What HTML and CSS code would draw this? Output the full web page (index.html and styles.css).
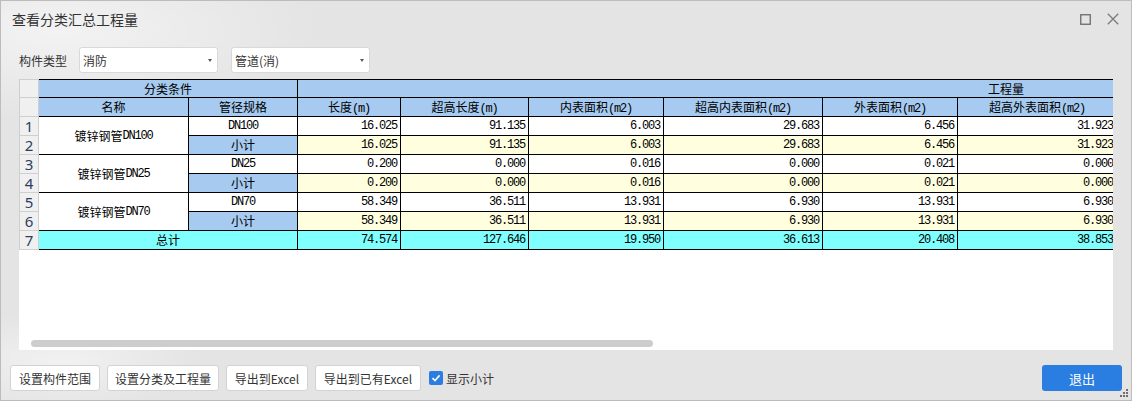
FILE: index.html
```html
<!DOCTYPE html>
<html lang="zh-CN">
<head>
<meta charset="utf-8">
<title>查看分类汇总工程量</title>
<link rel="stylesheet" href="styles.css">
</head>
<body>
<div class="window">
  <div class="titlebar">
    <div class="title">查看分类汇总工程量</div>
    <div class="winctl">
      <svg class="ico-max" width="11" height="11" viewBox="0 0 11 11"><rect x="0.75" y="0.75" width="9.5" height="9.5" fill="none" stroke="#6a6a6a" stroke-width="1.3"/></svg>
      <svg class="ico-close" width="12" height="12" viewBox="0 0 12 12"><path d="M0.8 0.8L11.2 11.2M11.2 0.8L0.8 11.2" stroke="#7a7a7a" stroke-width="1.3" fill="none"/></svg>
    </div>
  </div>

  <div class="toolbar">
    <span class="label">构件类型</span>
    <div class="select"><span>消防</span><i class="caret"></i></div>
    <div class="select"><span>管道(消)</span><i class="caret"></i></div>
  </div>

  <div class="gridwrap">
    <div class="sheet">
      <div class="table">
        <div class="c rn first"></div>
        <div class="c h top span2">分类条件</div>
        <div class="c h top span6 gcl">工程量</div>

        <div class="c rn"></div>
        <div class="c h">名称</div>
        <div class="c h">管径规格</div>
        <div class="c h">长度<span class="m">(m)</span></div>
        <div class="c h">超高长度<span class="m">(m)</span></div>
        <div class="c h">内表面积<span class="m">(m2)</span></div>
        <div class="c h">超高内表面积<span class="m">(m2)</span></div>
        <div class="c h">外表面积<span class="m">(m2)</span></div>
        <div class="c h">超高外表面积<span class="m">(m2)</span></div>

        <div class="c rn">1</div>
        <div class="c name">镀锌钢管<span class="m">DN100</span></div>
        <div class="c spec m">DN100</div>
        <div class="c n">16.025</div><div class="c n">91.135</div><div class="c n">6.003</div><div class="c n">29.683</div><div class="c n">6.456</div><div class="c n">31.923</div>

        <div class="c rn">2</div>
        <div class="c h">小计</div>
        <div class="c n y">16.025</div><div class="c n y">91.135</div><div class="c n y">6.003</div><div class="c n y">29.683</div><div class="c n y">6.456</div><div class="c n y">31.923</div>

        <div class="c rn">3</div>
        <div class="c name">镀锌钢管<span class="m">DN25</span></div>
        <div class="c spec m">DN25</div>
        <div class="c n">0.200</div><div class="c n">0.000</div><div class="c n">0.016</div><div class="c n">0.000</div><div class="c n">0.021</div><div class="c n">0.000</div>

        <div class="c rn">4</div>
        <div class="c h">小计</div>
        <div class="c n y">0.200</div><div class="c n y">0.000</div><div class="c n y">0.016</div><div class="c n y">0.000</div><div class="c n y">0.021</div><div class="c n y">0.000</div>

        <div class="c rn">5</div>
        <div class="c name">镀锌钢管<span class="m">DN70</span></div>
        <div class="c spec m">DN70</div>
        <div class="c n">58.349</div><div class="c n">36.511</div><div class="c n">13.931</div><div class="c n">6.930</div><div class="c n">13.931</div><div class="c n">6.930</div>

        <div class="c rn">6</div>
        <div class="c h">小计</div>
        <div class="c n y">58.349</div><div class="c n y">36.511</div><div class="c n y">13.931</div><div class="c n y">6.930</div><div class="c n y">13.931</div><div class="c n y">6.930</div>

        <div class="c rn">7</div>
        <div class="c t span2 ctr">总计</div>
        <div class="c n t">74.574</div><div class="c n t">127.646</div><div class="c n t">19.950</div><div class="c n t">36.613</div><div class="c n t">20.408</div><div class="c n t">38.853</div>
      </div>
    </div>
    <div class="hscroll"></div>
  </div>

  <div class="footer">
    <button class="btn w1">设置构件范围</button>
    <button class="btn w2">设置分类及工程量</button>
    <button class="btn w3">导出到Excel</button>
    <button class="btn w4">导出到已有Excel</button>
    <span class="check"><svg width="10" height="10" viewBox="0 0 10 10"><path d="M1.5 5.2L4 7.6L8.6 2.4" fill="none" stroke="#fff" stroke-width="1.6"/></svg></span>
    <span class="checklabel">显示小计</span>
    <button class="exit">退出</button>
  </div>

  <svg class="grip" width="9" height="9" viewBox="0 0 9 9">
    <rect x="6" y="0" width="2" height="2" fill="#6d6d6d"/>
    <rect x="3" y="3" width="2" height="2" fill="#6d6d6d"/>
    <rect x="6" y="3" width="2" height="2" fill="#6d6d6d"/>
    <rect x="0" y="6" width="2" height="2" fill="#6d6d6d"/>
    <rect x="3" y="6" width="2" height="2" fill="#6d6d6d"/>
    <rect x="6" y="6" width="2" height="2" fill="#6d6d6d"/>
  </svg>
</div>
</body>
</html>
```

FILE: styles.css
```css
* { box-sizing: border-box; }

body {
  margin: 0;
  font-family: "Noto Sans CJK SC", "Noto Sans", sans-serif;
}

.window {
  position: relative;
  width: 1132px;
  height: 401px;
  border: 1px solid #bcbcbc;
  background:
    radial-gradient(ellipse 260px 90px at 60px 30px, rgba(255,255,255,0.55), rgba(255,255,255,0)),
    radial-gradient(ellipse 140px 50px at 60px 360px, rgba(255,255,255,0.5), rgba(255,255,255,0)),
    #e4e4e4;
  display: flex;
  flex-direction: column;
}

.titlebar {
  height: 36px;
  display: flex;
  align-items: center;
  justify-content: space-between;
  padding: 0 12px 0 11px;
}

.title {
  font-size: 14px;
  color: #333;
  line-height: 20px;
}

.winctl {
  display: flex;
  align-items: center;
  gap: 16px;
}

.winctl svg { display: block; }

.toolbar {
  margin-top: 10px;
  height: 26px;
  display: flex;
  align-items: center;
  padding-left: 18px;
}

.label {
  width: 48px;
  margin-right: 12px;
  font-size: 12px;
  color: #333;
}

.select {
  width: 139px;
  height: 26px;
  margin-right: 13px;
  background: #fff;
  border: 1px solid #d9d9d9;
  border-radius: 3px;
  display: flex;
  align-items: center;
  justify-content: space-between;
  padding: 0 5px 0 3px;
  font-size: 12px;
  color: #333;
}

.caret {
  width: 0;
  height: 0;
  border-left: 2.5px solid transparent;
  border-right: 2.5px solid transparent;
  border-top: 3px solid #555;
}

.gridwrap {
  margin: 6px 0 0 18px;
  width: 1094px;
  height: 271px;
  background: #fff;
  overflow: hidden;
  display: flex;
  flex-direction: column;
}

.sheet {
  flex: 0 0 261px;
  overflow: hidden;
}

.table {
  display: grid;
  grid-template-columns: 20px 150px 109px 103px 128px 135px 159px 135px 159px;
  grid-auto-rows: 19px;
  width: 1098px;
}

.c {
  border-right: 1px solid #000;
  border-bottom: 1px solid #000;
  font-size: 12px;
  line-height: 18px;
  white-space: nowrap;
  overflow: hidden;
  color: #000;
  background: #fff;
}

.h {
  background: #a6caf0;
  text-align: center;
}

.top {
  border-top: 1px solid #000;
  line-height: 17px;
}

.span2 { grid-column: span 2; }
.span6 { grid-column: span 6; }

.gcl {
  text-align: left;
  padding-left: 690px;
}

.rn {
  background: #f0f0f0;
  border-left: 1px solid #cfcfcf;
  border-right: 1px solid #cfcfcf;
  border-bottom: 1px solid #cfcfcf;
  text-align: center;
  color: #2c3e5c;
  font-family: "Noto Sans", sans-serif;
  font-size: 15px;
}

.rn.first { border-top: 1px solid #cfcfcf; }

.m {
  font-family: "Liberation Mono", monospace;
  letter-spacing: -1.2px;
}

.name {
  grid-row: span 2;
  display: flex;
  align-items: center;
  justify-content: center;
}

.spec { text-align: center; }

.n {
  text-align: right;
  padding-right: 3px;
  font-family: "Liberation Mono", monospace;
  letter-spacing: -1.2px;
}

.y { background: #ffffe0; }
.t { background: #80ffff; }
.ctr { text-align: center; }

.hscroll {
  height: 7px;
  width: 622px;
  margin: 0 0 3px 12px;
  background: #cdcdcd;
  border-radius: 4px;
}

.footer {
  margin-top: 15px;
  display: flex;
  align-items: center;
  padding: 0 9px;
}

.btn {
  height: 26px;
  padding: 0;
  margin: 0 7px 0 0;
  border: 1px solid #d3d3d3;
  border-radius: 3px;
  background: #fff;
  font-family: "Noto Sans CJK SC", "Noto Sans", sans-serif;
  font-size: 12px;
  color: #333;
}

.w1 { width: 90px; }
.w2 { width: 112px; }
.w3 { width: 82px; }
.w4 { width: 106px; }

.check {
  width: 14px;
  height: 14px;
  margin-left: 1px;
  background: #2a7de1;
  border-radius: 2px;
  display: flex;
  align-items: center;
  justify-content: center;
}

.check svg { display: block; }

.checklabel {
  margin-left: 3px;
  font-size: 12px;
  color: #333;
}

.exit {
  margin-left: auto;
  width: 80px;
  height: 26px;
  border: 0;
  border-radius: 3px;
  background: #2a7de1;
  color: #fff;
  font-family: "Noto Sans CJK SC", "Noto Sans", sans-serif;
  font-size: 13px;
  padding: 0;
}

.grip {
  position: absolute;
  right: 2px;
  bottom: 2px;
  display: block;
}
```
